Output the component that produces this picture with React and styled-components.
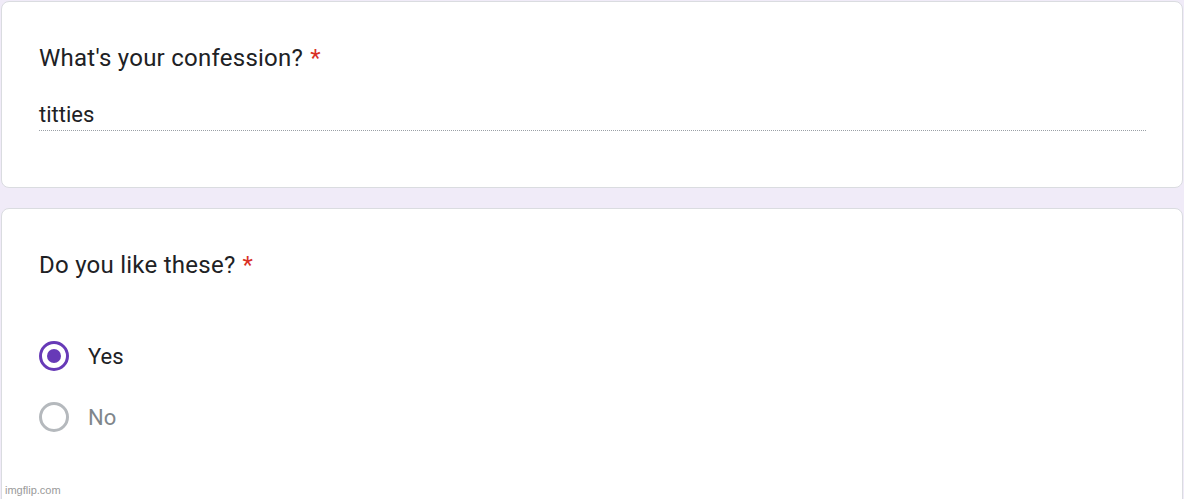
import React from "react";
import styled, { createGlobalStyle } from "styled-components";

const GlobalStyle = createGlobalStyle`
    html, body {
        margin: 0;
        padding: 0;
        background: #f0ebf8;
        font-family: Roboto, "Liberation Sans", Arial, sans-serif;
        color: #202124;
    }
`;

const Page = styled.div`
    position: relative;
    height: 499px;
    overflow: hidden;
    padding: 1px;
    box-sizing: border-box;
    display: flex;
    flex-direction: column;
    gap: 20px;
`;

const Card = styled.div`
    background: #fff;
    border: 1px solid #dadce0;
    border-radius: 8px;
    padding: 41px 37px 0;
    box-sizing: border-box;
    height: ${(p) => p.$height || "auto"};
    flex-shrink: 0;
`;

const Question = styled.div`
    font-size: 24px;
    line-height: 30px;
    letter-spacing: 0.25px;
    color: #202124;
`;

const Required = styled.span`
    color: #d93025;
    margin-left: 7px;
`;

const Answer = styled.div`
    margin-top: 28px;
    width: 1107px;
    font-size: 22px;
    line-height: 28px;
    padding-bottom: 1px;
    border-bottom: 1px dotted #9aa0a6;
`;

const Options = styled.div`
    margin-top: 61px;
    display: flex;
    flex-direction: column;
    gap: 31px;
`;

const Option = styled.label`
    display: flex;
    align-items: center;
    gap: 19px;
    font-size: 22px;
    color: ${(p) => (p.$checked ? "#202124" : "#80868b")};
`;

const Radio = styled.span`
    width: 30px;
    height: 30px;
    border-radius: 50%;
    box-sizing: border-box;
    border: 3px solid ${(p) => (p.$checked ? "#673ab7" : "#b5b9bd")};
    display: flex;
    align-items: center;
    justify-content: center;

    &::after {
        content: "";
        display: ${(p) => (p.$checked ? "block" : "none")};
        width: 14px;
        height: 14px;
        border-radius: 50%;
        background: #673ab7;
    }
`;

const Watermark = styled.div`
    position: absolute;
    left: 5px;
    bottom: 3px;
    font-family: "Liberation Sans", Arial, sans-serif;
    font-size: 11px;
    color: #9a9a9a;
`;

const App = () => {
    const options = [
        { label: "Yes", checked: true },
        { label: "No", checked: false },
    ];
    return (
        <>
            <GlobalStyle />
            <Page>
                <Card $height="187px">
                    <Question>
                        What's your confession?<Required>*</Required>
                    </Question>
                    <Answer>titties</Answer>
                </Card>
                <Card $height="400px">
                    <Question>
                        Do you like these?<Required>*</Required>
                    </Question>
                    <Options>
                        {options.map((o) => (
                            <Option key={o.label} $checked={o.checked}>
                                <Radio $checked={o.checked} />
                                {o.label}
                            </Option>
                        ))}
                    </Options>
                </Card>
                <Watermark>imgflip.com</Watermark>
            </Page>
        </>
    );
};

export default App;
